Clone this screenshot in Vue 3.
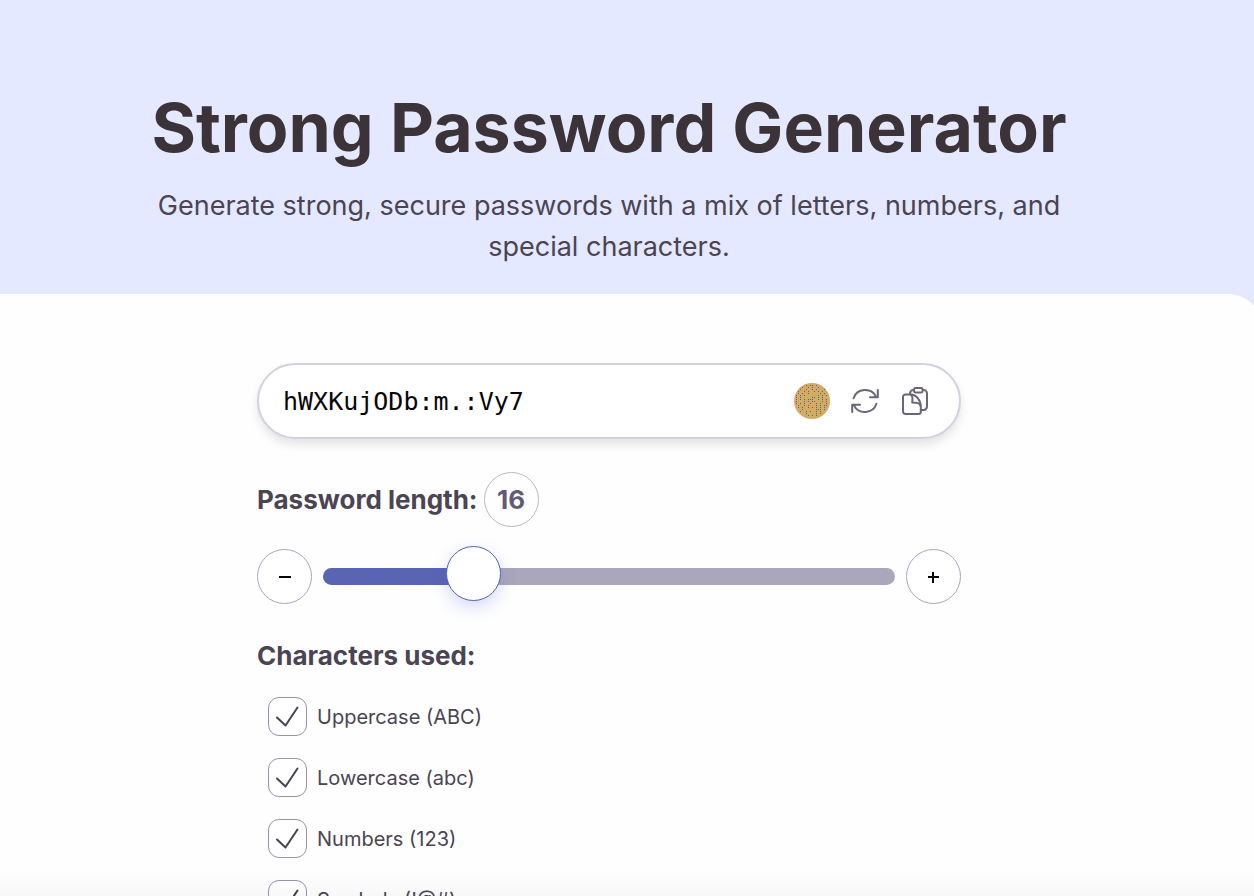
<script setup>
import { ref, computed } from 'vue'

const MIN = 1
const MAX = 64
const password = ref('hWXKujODb:m.:Vy7')
const length = ref(16)

const options = ref([
  { id: 'upper', label: 'Uppercase (ABC)', on: true },
  { id: 'lower', label: 'Lowercase (abc)', on: true },
  { id: 'digits', label: 'Numbers (123)', on: true },
  { id: 'symbols', label: 'Symbols (!@#)', on: true }
])

const fill = computed(() => ({
  '--fill': ((length.value - MIN) / (MAX - MIN)) * 100 + '%'
}))

const speckle = [
  '..................',
  '......#.##.#......',
  '....#..#.#..#.....',
  '...#..#..#.#...#..',
  '..#..#.#..#.#.#...',
  '..#.#..#.....#.#..',
  '.#.#.#......#.#.#.',
  '.#.#.....##.#.#...',
  '.#.#.#.###..#.#.#.',
  '.#...#.#.##...#.#.',
  '.#.#.#..#..#.#..#.',
  '..#..#.#...#.#.##.',
  '..#.#..#.#.#.#.#..',
  '....#......###.#..',
  '...#..#.#..#.#....',
  '......#....#.#....',
  '.......#.#.#......',
  '..................'
]
const dots = speckle.flatMap((row, y) =>
  [...row].flatMap((c, x) => (c === '#' ? [{ x: x * 2, y: y * 2 }] : []))
)

function step(n) {
  length.value = Math.min(MAX, Math.max(MIN, Number(length.value) + n))
}

function generate() {
  const sets = {
    upper: 'ABCDEFGHIJKLMNOPQRSTUVWXYZ',
    lower: 'abcdefghijklmnopqrstuvwxyz',
    digits: '0123456789',
    symbols: '!@#$%^&*.:;?'
  }
  const pool = options.value.filter(o => o.on).map(o => sets[o.id]).join('')
  if (!pool) return
  password.value = Array.from({ length: Number(length.value) }, () => pool[Math.floor(Math.random() * pool.length)]).join('')
}

function copy() {
  navigator.clipboard?.writeText(password.value)
}
</script>

<template>
  <div class="page">
    <header class="hero">
      <h1>Strong Password Generator</h1>
      <p>Generate strong, secure passwords with a mix of letters, numbers, and special characters.</p>
    </header>

    <main class="panel">
      <form class="tool" @submit.prevent>
        <div class="field">
          <input class="password" type="text" readonly aria-label="Generated password" v-model="password" />
          <svg class="badge" viewBox="0 0 36 36" aria-hidden="true">
            <circle cx="18" cy="18" r="18" fill="#d1ab69" />
            <rect v-for="(d, i) in dots" :key="i" :x="d.x" :y="d.y" width="1" height="1" fill="#00908c" />
          </svg>
          <button class="icon" type="button" aria-label="Generate a new password" @click="generate">
            <svg viewBox="0 0 28 26" width="28" height="26">
              <path d="M2.6 10.2A12 11.4 0 0 1 25 8.6M26.8 2V9.2H19M25.4 15.8A12 11.4 0 0 1 3 17.4M1.2 24V16.8H9" />
            </svg>
          </button>
          <button class="icon copy" type="button" aria-label="Copy password" @click="copy">
            <svg viewBox="0 0 26 28" width="26" height="28">
              <rect x="8" y="3" width="17" height="20" rx="3.4" />
              <rect x="12" y="1" width="8.6" height="4.4" rx="1.4" fill="#fff" />
              <path fill="#fff" d="M3.4 7.6H8.4C14.6 7.6 18.8 13.6 18.8 20V24.8A2.2 2.2 0 0 1 16.6 27H3.4A2.4 2.4 0 0 1 1 24.6V10A2.4 2.4 0 0 1 3.4 7.6Z" />
              <path d="M8.8 7.6C11.2 9 10.6 11.6 10.2 15.6C13.6 15.6 17.6 15.4 18.4 18.6" />
            </svg>
          </button>
        </div>

        <div class="length">
          <label for="length">Password length:</label>
          <output for="length">{{ length }}</output>
        </div>

        <div class="slider">
          <button class="round" type="button" aria-label="Shorter" @click="step(-1)">
            <svg viewBox="0 0 12 12" width="12" height="12"><path d="M0 6H12" /></svg>
          </button>
          <input id="length" type="range" :min="MIN" :max="MAX" v-model="length" :style="fill" />
          <button class="round" type="button" aria-label="Longer" @click="step(1)">
            <svg viewBox="0 0 12 12" width="12" height="12"><path d="M0 6H11M5 1V12" /></svg>
          </button>
        </div>

        <fieldset>
          <legend>Characters used:</legend>
          <ul>
            <li v-for="o in options" :key="o.id">
              <span class="box">
                <input :id="o.id" type="checkbox" v-model="o.on" />
                <svg v-if="o.on" viewBox="0 0 39 39" aria-hidden="true"><path d="M9 20.5L17.5 28.5L29.5 10.5" /></svg>
              </span>
              <label :for="o.id">{{ o.label }}</label>
            </li>
          </ul>
        </fieldset>
      </form>
    </main>
    <div class="shade"></div>
  </div>
</template>

<style>
body {
  margin: 0;
  background: #e4e9ff;
}
</style>

<style scoped>
* {
  box-sizing: border-box;
}
.page {
  height: 100vh;
  overflow: hidden;
  background: #e4e9ff;
  color: #4b4453;
  font-family: Inter, "Liberation Sans", sans-serif;
}
.hero {
  padding: 86px 36px 27px 0;
  text-align: center;
}
h1 {
  margin: 0;
  font-size: 68px;
  line-height: 82px;
  font-weight: 700;
  color: #3c3339;
}
.hero p {
  max-width: 940px;
  margin: 17px auto 0;
  font-size: 27px;
  line-height: 41px;
}
.panel {
  margin: 0 -8px 0 -44px;
  padding: 69px 44px 60px;
  min-height: 100vh;
  border-radius: 34px;
  background: #fefefe;
}
.tool {
  max-width: 704px;
  margin: 0 auto;
}
.field {
  display: flex;
  align-items: center;
  height: 76px;
  padding: 0 31px 0 24px;
  border: 2px solid #d3d0e0;
  border-radius: 38px;
  background: #fff;
  box-shadow: 0 6px 10px rgba(0, 0, 0, 0.1);
}
.password {
  flex: 1;
  min-width: 0;
  padding: 0;
  border: 0;
  outline: 0;
  background: none;
  color: #080506;
  font-family: "DejaVu Sans Mono", monospace;
  font-size: 25px;
}
.badge {
  width: 36px;
  height: 36px;
}
.icon {
  display: flex;
  margin-left: 21px;
  padding: 0;
  border: 0;
  background: none;
}
.copy {
  margin-left: 23px;
}
.icon svg {
  fill: none;
  stroke: #6b6578;
  stroke-width: 2;
  stroke-linecap: round;
  stroke-linejoin: round;
}
.length {
  display: flex;
  align-items: center;
  gap: 6px;
  margin-top: 33px;
}
.length label,
legend {
  font-size: 26px;
  line-height: 32px;
  font-weight: 700;
}
output {
  display: grid;
  place-items: center;
  width: 55px;
  height: 55px;
  border: 1px solid #bbb9bf;
  border-radius: 50%;
  color: #625a76;
  font-size: 26px;
  font-weight: 700;
}
.slider {
  display: flex;
  align-items: center;
  gap: 11px;
  margin-top: 22px;
}
.round {
  display: grid;
  place-items: center;
  flex: none;
  width: 55px;
  height: 55px;
  padding: 0;
  border: 1px solid #a9a5bb;
  border-radius: 50%;
  background: #fff;
}
.round path {
  stroke: #0a0708;
  stroke-width: 2;
}
input[type='range'] {
  flex: 1;
  min-width: 0;
  height: 55px;
  margin: 0;
  appearance: none;
  background: none;
}
input[type='range']::-webkit-slider-runnable-track {
  height: 17px;
  border-radius: 9px;
  background:
    linear-gradient(90deg, transparent var(--fill), #aaa6bb var(--fill)),
    repeating-linear-gradient(120deg, #4064f2 0 1px, #6b6589 1px 2px, #4064f2 2px 3px, #6b6589 3px 5px);
}
input[type='range']::-webkit-slider-thumb {
  appearance: none;
  width: 55px;
  height: 55px;
  margin-top: -22px;
  border: 1px solid #5060b8;
  border-radius: 50%;
  background: #fff;
  box-shadow: 0 6px 16px rgba(67, 97, 238, 0.22);
}
fieldset {
  margin: 36px 0 0;
  padding: 0;
  border: 0;
}
legend {
  padding: 0;
}
ul {
  display: grid;
  gap: 22px;
  margin: 25px 0 0;
  padding: 0 0 0 11px;
  list-style: none;
}
li {
  display: flex;
  align-items: center;
  gap: 10px;
  font-size: 20px;
}
.box {
  position: relative;
  display: flex;
  width: 39px;
  height: 39px;
}
.box input {
  width: 100%;
  height: 100%;
  margin: 0;
  appearance: none;
  border: 1px solid #9793ad;
  border-radius: 11px;
  background: #fff;
}
.box svg {
  position: absolute;
  inset: 0;
  pointer-events: none;
}
.box path {
  fill: none;
  stroke: #48424f;
  stroke-width: 2;
  stroke-linecap: round;
  stroke-linejoin: round;
}
.shade {
  position: fixed;
  inset: auto 0 0;
  height: 26px;
  background: linear-gradient(rgba(0, 0, 0, 0), rgba(0, 0, 0, 0.025));
  pointer-events: none;
}
</style>
